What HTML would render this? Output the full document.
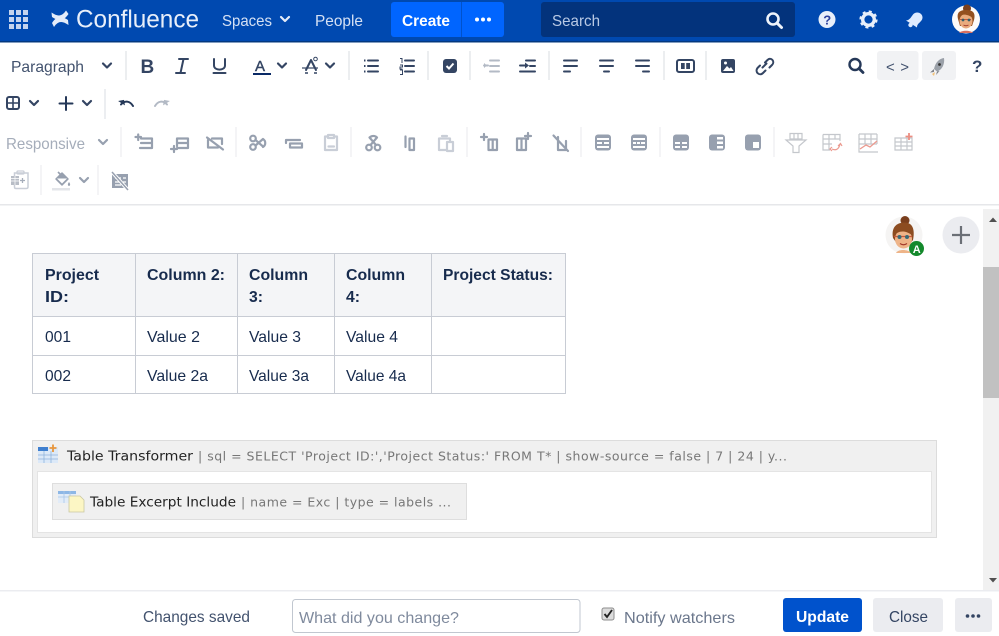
<!DOCTYPE html>
<html><head><meta charset="utf-8"><title>Confluence editor</title>
<style>
html,body{margin:0;padding:0;background:#fff;width:999px;height:636px;overflow:hidden}
svg{display:block}
text{font-family:"Liberation Sans",sans-serif;font-size:16px;fill:#172b4d}
.d{fill:none;stroke:#344563;stroke-width:2;stroke-linecap:round;stroke-linejoin:round}
.g{fill:none;stroke:#97a0af;stroke-width:2.200;stroke-linecap:round;stroke-linejoin:round}
.l{fill:none;stroke:#c9ced7;stroke-width:2.200;stroke-linecap:round;stroke-linejoin:round}
.s{stroke:#e6e8ec;stroke-width:1.500}
.s2{stroke:#f0f1f3;stroke-width:1.500}
</style></head><body>
<svg width="999" height="636" viewBox="0 0 999 636" xmlns="http://www.w3.org/2000/svg">
<defs>
<path id="chev" d="M-4 -2L0 2L4 -2" fill="none" stroke-width="2.200" stroke-linecap="round" stroke-linejoin="round"/>
</defs>

<!-- header -->
<rect width="999" height="42" fill="#0049b0"/>
<rect y="41" width="999" height="1.500" fill="#03387f"/>
<g fill="#c3d3ee">
<rect x="9" y="10" width="5" height="5"/><rect x="16" y="10" width="5" height="5"/><rect x="23" y="10" width="5" height="5"/>
<rect x="9" y="17" width="5" height="5"/><rect x="16" y="17" width="5" height="5"/><rect x="23" y="17" width="5" height="5"/>
<rect x="9" y="24" width="5" height="5"/><rect x="16" y="24" width="5" height="5"/><rect x="23" y="24" width="5" height="5"/>
</g>
<path d="M52 23C57 15 62 16 68 20L68.500 25C62 20.500 58 21 54 27ZM68.500 14C63 22 58 21 52 17L51.500 12.500C58 17 62 16.500 66 10.500Z" fill="#e4ecf9"/>
<text x="76" y="27.500" textLength="123" lengthAdjust="spacingAndGlyphs" style="font-size:25px;fill:#e8effa">Confluence</text>
<text x="222" y="26" textLength="50" lengthAdjust="spacingAndGlyphs" style="fill:#d5e1f4">Spaces</text>
<use href="#chev" x="285" y="19" stroke="#e4ecf9"/>
<text x="315" y="26" textLength="48" lengthAdjust="spacingAndGlyphs" style="fill:#d5e1f4">People</text>
<rect x="391" y="2" width="113" height="35" rx="3" fill="#0065ff"/>
<rect x="461" y="2" width="1" height="35" fill="#0052cc"/>
<text x="402" y="26" textLength="48" lengthAdjust="spacingAndGlyphs" style="font-weight:700;fill:#fff">Create</text>
<g fill="#fff"><circle cx="477" cy="19.500" r="2"/><circle cx="483" cy="19.500" r="2"/><circle cx="489" cy="19.500" r="2"/></g>
<rect x="541" y="2" width="254" height="35" rx="3" fill="#03337c"/>
<text x="552" y="26" textLength="48" lengthAdjust="spacingAndGlyphs" style="fill:#b9c9e4">Search</text>
<circle cx="773" cy="19" r="5.500" fill="none" stroke="#eef3fb" stroke-width="2.600"/>
<path d="M777 23L781.500 27.500" stroke="#eef3fb" stroke-width="3" stroke-linecap="round"/>
<circle cx="827" cy="19.500" r="8.500" fill="#e8effa"/>
<text x="823.200" y="24.500" style="font-size:13px;font-weight:700;fill:#2a3f9c">?</text>
<circle cx="868.500" cy="19.500" r="5.800" fill="none" stroke="#e8effa" stroke-width="3.400"/>
<circle cx="868.500" cy="19.500" r="8" fill="none" stroke="#e8effa" stroke-width="2.200" stroke-dasharray="3 3.280"/>
<path d="M906 20.500C910 20 911 17 913 14.500C915 12 919 12 921 14C923 16 923 19 921 21C919 23.500 917 24 917 27.500Z" fill="#deebff"/>
<circle cx="910.500" cy="25" r="2.200" fill="#deebff"/>
<!-- avatar header -->
<circle cx="966" cy="19.500" r="14" fill="#fdfbf9"/>
<circle cx="967" cy="8.500" r="4" fill="#7a3f1d"/>
<path d="M958 19C956 11 962 10 966 10C972 10 976 12 974 20L972 26L960 26Z" fill="#93501f"/>
<ellipse cx="966" cy="21" rx="6.500" ry="7.500" fill="#e9ab7d"/>
<path d="M959 18C961 14 966 13 973 18L973 14L960 13Z" fill="#93501f"/>
<path d="M960 19.500h11" stroke="#c9573a" stroke-width="1"/>
<circle cx="963" cy="20" r="1.400" fill="#33606b"/><circle cx="969" cy="20" r="1.400" fill="#33606b"/>
<path d="M963.500 25Q966 26.500 968.500 25" fill="none" stroke="#a33a2b" stroke-width="1"/>
<path d="M959 33C961 30 971 30 973 33Z" fill="#d9705f"/>

<!-- toolbar row 1 -->
<text x="11" y="72" textLength="73" lengthAdjust="spacingAndGlyphs" style="fill:#42526e">Paragraph</text>
<use href="#chev" x="107" y="65.500" stroke="#344563"/>
<g class="s"><path d="M126 51V80M349 51V80M428 51V80M470 51V80M549 51V80M664 51V80M706 51V80" fill="none"/></g>
<text x="140.500" y="73" style="font-size:19px;font-weight:700;fill:#344563">B</text>
<path class="d" d="M179 59H188M176 73H185M183.500 59L180.500 73" stroke-width="2.200"/>
<path class="d" d="M214 59V65.500C214 71 225 71 225 65.500V59M213.500 73H225.500" stroke-width="2"/>
<text x="255" y="71" style="font-size:15px;fill:#344563;stroke:#344563;stroke-width:.4">A</text>
<rect x="253" y="73" width="18" height="2" fill="#0a2a66"/>
<use href="#chev" x="282" y="65.500" stroke="#344563"/>
<path d="M306 70L311 60L316 70" class="d" stroke-width="1.600"/><circle cx="315.500" cy="59" r="1.800" fill="none" stroke="#344563" stroke-width="1"/>
<path d="M302 68H318" stroke="#344563" stroke-width="1.200"/><path d="M305 73H308M314 73H317" stroke="#344563" stroke-width="1.500"/>
<use href="#chev" x="330" y="65.500" stroke="#344563"/>
<path class="d" d="M368 60.500H378M368 66H378M368 71.500H378" stroke-width="1.800"/>
<path d="M364 60.500h1.500M364 66h1.500M364 71.500h1.500" stroke="#344563" stroke-width="2"/>
<path class="d" d="M405 60.500H414M405 66H414M405 71.500H414" stroke-width="1.800"/>
<path d="M400 58.500h2v4.500M400 65h2.500v2h-2.500v2h2.500M400 70h2.500v4.500h-2.500" fill="none" stroke="#344563" stroke-width="1"/>
<rect x="443" y="59" width="14" height="14" rx="3" fill="#344563"/>
<path d="M446.500 66L449 68.500L453.500 63.500" fill="none" stroke="#fff" stroke-width="2"/>
<path d="M490 60.500H499M490 66H499M490 71.500H499M484 65.500H488" fill="none" stroke="#b3bac5" stroke-width="2" stroke-linecap="round"/>
<path d="M487 63L487 68L484 65.500Z" fill="#b3bac5" transform="rotate(180 485.500 65.500)"/>
<path class="d" d="M526 60.500H535M530 66H535M520 71.500H535M520 65.500H526" stroke-width="1.800"/>
<path d="M525 62.500L529 65.500L525 68.500Z" fill="#344563"/>
<path class="d" d="M564 60.500H577M564 66H577M564 71.500H570" stroke-width="1.800"/>
<path class="d" d="M600 60.500H613M600 66H613M604 71.500H609" stroke-width="1.800"/>
<path class="d" d="M636 60.500H649M636 66H649M643 71.500H649" stroke-width="1.800"/>
<rect x="677" y="60" width="17" height="12" rx="2" fill="none" stroke="#344563" stroke-width="2"/><rect x="681" y="63" width="9" height="6" fill="#344563"/><rect x="684.700" y="63" width="1.500" height="6" fill="#fff"/>
<rect x="721" y="59" width="14" height="14" rx="2" fill="#344563"/>
<path d="M723 71L727 66L729.500 68.500L731 67L733.500 71Z" fill="#fff"/><circle cx="725.500" cy="63" r="1.500" fill="#fff"/>
<path class="d" d="M762.500 67.500L766.500 63.500M760 65.500L757.500 68C754.500 72 759.500 76.500 763 73L765.500 70.500M765 62.500L767.500 60C771 56.500 775.500 61.500 772 65L769.500 67.500" stroke-width="1.800"/>
<circle cx="855" cy="64.500" r="5.500" fill="none" stroke="#253858" stroke-width="2.400"/><path d="M859 68.500L863 72.500" stroke="#253858" stroke-width="2.800" stroke-linecap="round"/>
<rect x="877" y="51" width="41.500" height="29" rx="3" fill="#f1f2f4"/>
<text x="886" y="72" textLength="23" lengthAdjust="spacing" style="font-size:15px;fill:#42526e">&lt; &gt;</text>
<rect x="922" y="51" width="34" height="29" rx="3" fill="#f1f2f4"/>
<path d="M944 58C939 58.500 935 63 934 69L937 71.500C942 70 945 64 944 58Z" fill="#9aa0a8"/><path d="M934 69L930 72.500L934 72ZM937 71.500L936 75L939.500 71Z" fill="#7d8188"/><circle cx="939.500" cy="64.500" r="1.400" fill="#333"/><path d="M932 74L935 72L934 76Z" fill="#f2c27a"/>
<text x="972" y="72" style="font-size:17px;font-weight:700;fill:#344563">?</text>

<!-- row 2 -->
<rect x="7" y="97" width="12" height="12" rx="2" fill="none" stroke="#344563" stroke-width="2"/><path d="M13 97V109M7 103H19" stroke="#344563" stroke-width="1.600"/>
<use href="#chev" x="34" y="103" stroke="#344563"/>
<path d="M66 97V110M59.500 103.500H72.500" stroke="#253858" stroke-width="2" stroke-linecap="round"/>
<use href="#chev" x="87" y="103" stroke="#344563"/>
<path class="s" d="M105 89V119" fill="none"/>
<path d="M121 104.500C125 100 130 101 133 106" fill="none" stroke="#253858" stroke-width="2" stroke-linecap="round"/><path d="M118.500 100.500H124.500V106Z" fill="#253858" transform="rotate(-10 121 103)"/>
<path d="M167 104.500C163 100 158 101 155 106" fill="none" stroke="#b3bac5" stroke-width="2" stroke-linecap="round"/><path d="M169.500 100.500H163.500V106Z" fill="#b3bac5" transform="rotate(10 167 103)"/>

<!-- row 3 -->
<text x="6" y="149" textLength="79" lengthAdjust="spacingAndGlyphs" style="fill:#a5adba">Responsive</text>
<use href="#chev" x="103" y="142" stroke="#97a0af"/>
<g class="s2" fill="none"><path d="M121 127V157M236 127V157M351 127V157M467 127V157M581 127V157M660 127V157M774 127V157M41 165V195M98 165V195"/></g>
<g class="g">
<path d="M141 138.500H152V148H140M141 143H152M135.500 137H141M138.200 134.500V140"/>
<path d="M177 138.500H188V148H177M177 143H188M177 138.500V146M171 149H177M174 146V152"/>
<path d="M207 137.500L223 149.500M212 138.500H222V144M208 140V147.500H218"/>
<circle cx="253" cy="138.500" r="2.800"/><circle cx="253" cy="147" r="2.800"/><path d="M255.500 140L263 146.500M255.500 145.500L263 139M263 139C266 141 266 145 263 147"/>
<path d="M286 140H300M290 143.500H302V147.500H290Z M286 140V143"/>
<circle cx="369" cy="147.500" r="2.800"/><circle cx="377.500" cy="147.500" r="2.800"/><path d="M370.500 145L377 137.500M376 145L369.500 137.500M369.500 137.500C372 135.500 375 135.500 377 137.500"/>
<path d="M405.500 136.500V147M409.500 138.500H414V150H409.500Z"/>
<path d="M488.500 139.500H497V150H488.500ZM492.700 139.500V150M481 137H487M484 134V140"/>
<path d="M517 138.500H526V150H517ZM521.500 138.500V150M525 136H531M528 133V139"/>
<path d="M553.500 135.500L568 151M558 137V150H566V141"/>
</g>
<g class="l">
<path d="M328 136.500H325V150H337V136.500H334M328 135H334V138H328ZM328.500 146.500H334"/>
<path d="M439 138.500V150H446M439 138.500H450V142M442 136H447M447 142H453V151H447Z"/>
</g>
<g fill="#97a0af">
<rect x="595" y="134.500" width="16" height="16" rx="3"/><rect x="631" y="134.500" width="16" height="16" rx="3"/>
<rect x="673" y="134.500" width="16" height="16" rx="3"/><rect x="709" y="134.500" width="16" height="16" rx="3"/><rect x="745" y="134.500" width="16" height="16" rx="3"/>
</g>
<g fill="#fff">
<rect x="597" y="138" width="12" height="2"/><rect x="597" y="142" width="5" height="2"/><rect x="604" y="142" width="5" height="2"/><rect x="597" y="146" width="12" height="2"/>
<rect x="633" y="138" width="12" height="2"/><rect x="633" y="142" width="3" height="2"/><rect x="637" y="142" width="3" height="2"/><rect x="641" y="142" width="4" height="2"/><rect x="633" y="146" width="12" height="2"/>
<rect x="675" y="142" width="5" height="2"/><rect x="682" y="142" width="5" height="2"/><rect x="675" y="146" width="5" height="2"/><rect x="682" y="146" width="5" height="2"/>
<rect x="717" y="137" width="6" height="2.500"/><rect x="717" y="141.500" width="6" height="2.500"/><rect x="717" y="146" width="6" height="2.500"/>
<rect x="753" y="142" width="6" height="6"/>
</g>
<g fill="none" stroke="#c4c7cc" stroke-width="1.200">
<path d="M790 133.500H802V139H790ZM794 133.500V139M798 133.500V139M786 140H806L799 146V152.500H793V146Z"/>
<path d="M823 134.500H840V141M823 134.500V150H830M823 139H840M823 144H832M829 134.500V150M835 134.500V139"/>
<path d="M859 134H877M859 134V152H878M859 139H877M859 144H877M865 134V144M871 134V144M877 134V144"/>
<path d="M895 138H912V150H895ZM895 142H912M895 146H912M901 138V150M907 138V150"/>
</g>
<path d="M832 149C836 151 839 149 840 144M838 146L840.500 143.500L842 146M832 147L830 149L832 151" fill="none" stroke="#eb9a8f" stroke-width="1.200"/>
<path d="M860 149L866 145L870 147L877 141" fill="none" stroke="#eb9a8f" stroke-width="1.300"/>
<path d="M909 133V140M905.500 136.500H912.500" stroke="#ec8e82" stroke-width="1.800"/>

<!-- row 4 -->
<path d="M16 173H28V187C28 188 27 188.500 26 188.500H16C15 188.500 14.500 188 14.500 187V173Z" fill="none" stroke="#c9ced7" stroke-width="1.500"/>
<rect x="17" y="171" width="7" height="3" rx="1" fill="none" stroke="#c9ced7" stroke-width="1.300"/>
<g fill="#b8bdc6"><rect x="11" y="176" width="8" height="9"/></g>
<path d="M11 178.500H19M11 181H19M15 176V185" stroke="#fff" stroke-width=".7"/>
<path d="M20 180.500H25M22.500 178V183" stroke="#a5adba" stroke-width="1.300"/>
<path d="M56 179L62 173L68 179L62 185Z" fill="#97a0af" stroke="#97a0af" stroke-width="1.500" stroke-linejoin="round"/>
<path d="M57 178.500H67L62 183.500Z" fill="#fff"/><path d="M58 172L62 176" stroke="#97a0af" stroke-width="1.600"/>
<path d="M69 182C70.500 184 70.500 185.500 69 186C67.500 185.500 67.500 184 69 182Z" fill="#97a0af"/>
<rect x="52" y="188" width="18" height="2.500" fill="#e3e5e9"/>
<use href="#chev" x="84" y="180" stroke="#97a0af"/>
<path d="M112 174H128V188H112Z" fill="#97a0af"/>
<path d="M115 178H121M123 178H126M115 182H121M123 182H126M115 185H121" stroke="#fff" stroke-width="1.300"/>
<path d="M112 172L128 190" stroke="#fff" stroke-width="3.500"/><path d="M112 172L128 190" stroke="#97a0af" stroke-width="1.500"/>

<rect y="204" width="999" height="1.500" fill="#e6e7ea"/>

<!-- scrollbar -->
<rect x="983" y="209" width="16" height="381" fill="#f1f1f1"/>
<rect x="983" y="267" width="16" height="131" fill="#c1c1c1"/>
<path d="M989 222L993 217.500L997 222Z" fill="#505050"/>
<path d="M989 578L993 582.500L997 578Z" fill="#505050"/>

<!-- avatar & add -->
<circle cx="904" cy="235" r="18.500" fill="#f5f4f3"/>
<circle cx="905" cy="220.500" r="4.500" fill="#7a3f1d"/>
<path d="M893 238C891 228 896 222.500 904.500 222.500C913 222.500 915 230 913 240L909 245H898Z" fill="#8c4c20"/>
<ellipse cx="903.500" cy="239" rx="8.500" ry="9.500" fill="#eeb488"/>
<path d="M894 235C898 232 903 229 912 235L912 228L895 228Z" fill="#8c4c20"/>
<path d="M894 236.500H912" stroke="#c9573a" stroke-width="1.300"/>
<circle cx="899.500" cy="237" r="2" fill="#3a6a76"/><circle cx="907" cy="237" r="2" fill="#3a6a76"/>
<path d="M900 243.500Q903.500 246 907 243.500" fill="none" stroke="#a33a2b" stroke-width="1.200"/>
<path d="M896 253C898 249 908 249 911 253Z" fill="#eeb488"/>
<circle cx="916.500" cy="248.500" r="7.500" fill="#14892c"/>
<text x="912.800" y="252.800" style="font-size:11px;font-weight:700;fill:#fff">A</text>
<circle cx="961" cy="235" r="18.500" fill="#ebecf0"/>
<path d="M961 226V244M952 235H970" stroke="#6b6f76" stroke-width="2.200"/>

<!-- table -->
<rect x="32.500" y="253.500" width="533" height="62.500" fill="#f4f5f7"/>
<g fill="none" stroke="#c8ccd4" stroke-width="1">
<rect x="32.500" y="253.500" width="533" height="140"/>
<path d="M32.500 316.500H565.500M32.500 355.500H565.500M135.500 253.500V393.500M237.500 253.500V393.500M334.500 253.500V393.500M431.500 253.500V393.500"/>
</g>
<text x="45" y="280" textLength="54" lengthAdjust="spacingAndGlyphs" font-weight="700">Project</text>
<text x="45" y="302" textLength="24" lengthAdjust="spacingAndGlyphs" font-weight="700">ID:</text>
<text x="147" y="280" textLength="78" lengthAdjust="spacingAndGlyphs" font-weight="700">Column 2:</text>
<text x="249" y="280" textLength="59" lengthAdjust="spacingAndGlyphs" font-weight="700">Column</text>
<text x="249" y="302" textLength="14" lengthAdjust="spacingAndGlyphs" font-weight="700">3:</text>
<text x="346" y="280" textLength="59" lengthAdjust="spacingAndGlyphs" font-weight="700">Column</text>
<text x="346" y="302" textLength="14" lengthAdjust="spacingAndGlyphs" font-weight="700">4:</text>
<text x="443" y="280" textLength="110" lengthAdjust="spacingAndGlyphs" font-weight="700">Project Status:</text>
<text x="45" y="342" textLength="26" lengthAdjust="spacingAndGlyphs">001</text>
<text x="147" y="342" textLength="53" lengthAdjust="spacingAndGlyphs">Value 2</text>
<text x="249" y="342" textLength="52" lengthAdjust="spacingAndGlyphs">Value 3</text>
<text x="346" y="342" textLength="52" lengthAdjust="spacingAndGlyphs">Value 4</text>
<text x="45" y="381" textLength="26" lengthAdjust="spacingAndGlyphs">002</text>
<text x="147" y="381" textLength="61" lengthAdjust="spacingAndGlyphs">Value 2a</text>
<text x="249" y="381" textLength="60" lengthAdjust="spacingAndGlyphs">Value 3a</text>
<text x="346" y="381" textLength="60" lengthAdjust="spacingAndGlyphs">Value 4a</text>

<!-- macros -->
<rect x="32.500" y="440.500" width="904" height="97" fill="#f0f0f0" stroke="#dcdcdc"/>
<rect x="37.500" y="471.500" width="894" height="61" fill="#fff" stroke="#e4e4e4"/>
<rect x="52.500" y="483.500" width="414" height="36" fill="#f0f0f0" stroke="#dedede"/>
<rect x="38" y="447" width="20" height="16" fill="#dce9f8"/>
<rect x="38" y="447" width="10" height="4" fill="#3f7fcf"/>
<path d="M38 455H58M38 459H58M44 451V463M51 451V463" stroke="#8fb3dc" stroke-width=".8"/>
<path d="M53 444.500V452M49.500 448H56.500" stroke="#e8963c" stroke-width="1.800"/>
<text x="67" y="460.500" textLength="126" lengthAdjust="spacingAndGlyphs" style="font-family:'DejaVu Sans',sans-serif;font-size:13.500px;fill:#222">Table Transformer</text>
<text x="198" y="460.500" textLength="589" lengthAdjust="spacing" style="font-family:'DejaVu Sans',sans-serif;font-size:12.500px;fill:#777">| sql = SELECT 'Project ID:','Project Status:' FROM T* | show-source = false | 7 | 24 | y...</text>
<rect x="58" y="491" width="18" height="12" fill="#e2ecf8"/>
<rect x="58" y="491" width="18" height="3" fill="#8db7e6"/>
<path d="M58 497H76M64 491V503M70 491V503" stroke="#a9c6e8" stroke-width=".8"/>
<path d="M69 496H80L84 500V512H69Z" fill="#fcf6c4" stroke="#c9c7a3" stroke-width=".8"/>
<text x="90" y="506.500" textLength="146" lengthAdjust="spacingAndGlyphs" style="font-family:'DejaVu Sans',sans-serif;font-size:13.500px;fill:#222">Table Excerpt Include</text>
<text x="241" y="506.500" textLength="210" lengthAdjust="spacing" style="font-family:'DejaVu Sans',sans-serif;font-size:12.500px;fill:#777">| name = Exc | type = labels ...</text>

<!-- footer -->
<rect y="590" width="999" height="1.500" fill="#ebecf0"/>
<text x="143" y="622" textLength="107" lengthAdjust="spacingAndGlyphs" style="fill:#42526e">Changes saved</text>
<rect x="292.500" y="599.500" width="287.500" height="33" rx="3" fill="#fff" stroke="#c1c7d0" stroke-width="1"/>
<text x="299" y="623" textLength="160" lengthAdjust="spacingAndGlyphs" style="fill:#7f8a9d">What did you change?</text>
<rect x="602" y="608" width="12" height="12" rx="2" fill="#dcdcdc" stroke="#8e8e8e"/>
<path d="M604.500 614L607 617L612 610" fill="none" stroke="#222" stroke-width="1.900"/>
<text x="624" y="623" textLength="111" lengthAdjust="spacingAndGlyphs" style="fill:#6b778c">Notify watchers</text>
<rect x="783" y="598" width="79" height="34" rx="3" fill="#0052cc"/>
<text x="796" y="622" textLength="53" lengthAdjust="spacingAndGlyphs" style="font-weight:700;fill:#fff">Update</text>
<rect x="873" y="598" width="70" height="34" rx="3" fill="#ebecf0"/>
<text x="889" y="622" textLength="39" lengthAdjust="spacingAndGlyphs" style="fill:#344563">Close</text>
<rect x="955" y="598" width="37" height="34" rx="3" fill="#ebecf0"/>
<g fill="#344563"><circle cx="967.500" cy="616" r="1.800"/><circle cx="973" cy="616" r="1.800"/><circle cx="978.500" cy="616" r="1.800"/></g>
</svg>
</body></html>
